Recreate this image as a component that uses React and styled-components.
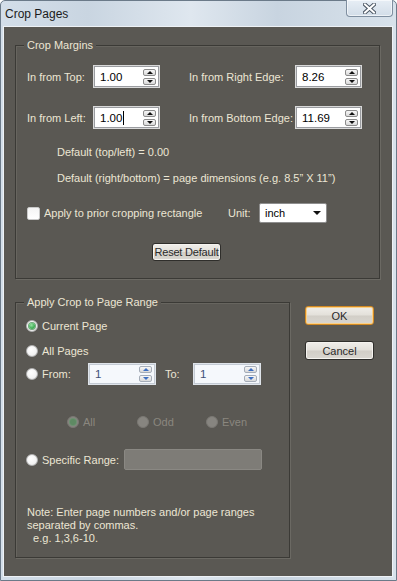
import React from 'react';
import styled, { createGlobalStyle, css } from 'styled-components';

const GlobalStyle = createGlobalStyle`
  html, body { margin: 0; padding: 0; background: #ffffff; }
  body { font-family: "Liberation Sans", Arial, sans-serif; font-size: 11px; }
  * { box-sizing: border-box; }
`;

const BG = '#5a5853';
const TEXT = '#ece6d4';

const Window = styled.div`
  width: 397px;
  height: 581px;
  display: flex;
  flex-direction: column;
  border: 1px solid #6b7a89;
  border-radius: 5px 5px 0 0;
  background: linear-gradient(90deg, #d3dee9 0%, #c9d5e1 22%, #dfe7ef 48%, #c8d4e0 70%, #d8e2eb 100%);
  padding: 0 3px 3px 2px;
`;

const TitleBar = styled.div`
  height: 25px;
  display: flex;
  align-items: center;
  padding-left: 2px;
`;

const Title = styled.div`
  font-size: 12px;
  color: #1b1b1b;
  margin-top: 1px;
`;

const CloseButton = styled.div`
  margin-left: auto;
  align-self: flex-start;
  margin-top: -1px;
  width: 47px;
  height: 17px;
  border: 1px solid #7f8fa0;
  border-top: none;
  border-radius: 0 0 4px 4px;
  background: linear-gradient(#e7eef5, #d2dde8);
  display: flex;
  align-items: center;
  justify-content: center;
  box-shadow: inset 0 0 0 1px rgba(255,255,255,0.6);
`;

const Content = styled.div`
  flex: 1;
  border: 1px solid #eef2f6;
  background: ${BG};
  padding: 18px 11px 0 11px;
  color: ${TEXT};
`;

const Group = styled.div`
  position: relative;
  width: ${p => p.$w}px;
  border: 1px solid #3b3a36;
  box-shadow: 1px 1px 0 #6b6963, inset 1px 1px 0 #67655f;
  padding: ${p => p.$pad};
`;

const Legend = styled.span`
  position: absolute;
  top: -7px;
  left: 8px;
  padding: 0 3px;
  line-height: 13px;
  background: ${BG};
  color: ${TEXT};
`;

const MarginGrid = styled.div`
  display: grid;
  grid-template-columns: 66px 96px 106px 67px;
  grid-auto-rows: 23px;
  row-gap: 18px;
  align-items: center;
`;

const Label = styled.span`
  white-space: nowrap;
  color: ${p => (p.$disabled ? '#8a877f' : TEXT)};
  width: ${p => (p.$w ? `${p.$w}px` : 'auto')};
  flex: none;
`;

const Field = styled.div`
  width: ${p => p.$w}px;
  height: ${p => p.$h}px;
  flex: none;
  display: flex;
  align-items: center;
  padding: 0 3px 0 6px;
  ${p => p.$variant === 'normal' && css`
    background: #ffffff;
    border: 1px solid #d9d9d9;
    box-shadow: inset 0 0 0 1px #9a9ca0;
    color: #000;
  `}
  ${p => p.$variant === 'pale' && css`
    background: #f5f8fc;
    border: 1px solid #dfe4ea;
    box-shadow: inset 0 0 0 1px #c4cbd4;
    color: #3d5178;
  `}
  ${p => p.$variant === 'dim' && css`
    background: #7e7c77;
    border: 1px solid #8a8883;
    border-radius: 2px;
  `}
`;

const Value = styled.span`
  flex: 1;
  display: flex;
  align-items: center;
  font-size: 11.5px;
`;

const Caret = styled.span`
  width: 1px;
  height: 14px;
  background: #000;
  margin-left: 1px;
`;

const SpinCol = styled.div`
  display: flex;
  flex-direction: column;
  gap: 2px;
`;

const SpinBtn = styled.div`
  width: 13px;
  height: 7px;
  border: 1px solid ${p => (p.$blue ? '#a5adb8' : '#8b8b8b')};
  border-radius: 2px;
  background: linear-gradient(#f7f7f7, #d9d9d9);
  display: flex;
  align-items: center;
  justify-content: center;
`;

const Arrow = styled.span`
  width: 0;
  height: 0;
  border-left: ${p => p.$size}px solid transparent;
  border-right: ${p => p.$size}px solid transparent;
  ${p => (p.$dir === 'up'
    ? css`border-bottom: ${p.$hgt}px solid ${p.$color};`
    : css`border-top: ${p.$hgt}px solid ${p.$color};`)}
`;

const Spinner = ({ blue }) => {
  const c = blue ? '#3c6fc2' : '#111';
  return (
    <SpinCol>
      <SpinBtn $blue={blue}><Arrow $dir="up" $size={3} $hgt={3} $color={c} /></SpinBtn>
      <SpinBtn $blue={blue}><Arrow $dir="down" $size={3} $hgt={3} $color={c} /></SpinBtn>
    </SpinCol>
  );
};

const DefaultNote = styled.div`
  margin-top: ${p => p.$mt}px;
  margin-left: 30px;
  line-height: 14px;
  white-space: nowrap;
`;

const CheckRow = styled.div`
  margin-top: 18px;
  height: 20px;
  display: flex;
  align-items: center;
`;

const Checkbox = styled.span`
  width: 13px;
  height: 13px;
  flex: none;
  background: linear-gradient(#f4f4f4, #ffffff);
  border: 1px solid #c9c9c9;
  border-radius: 2px;
  margin-right: 4px;
`;

const Select = styled.div`
  width: 68px;
  height: 20px;
  background: #fff;
  border: 1px solid #8e8e8e;
  border-radius: 2px;
  display: flex;
  align-items: center;
  justify-content: space-between;
  padding: 0 5px 0 5px;
  color: #000;
`;

const Button = styled.div`
  width: ${p => p.$w}px;
  height: ${p => p.$h}px;
  display: flex;
  align-items: center;
  justify-content: center;
  color: #2a2a2a;
  border-radius: 3px;
  white-space: nowrap;
  background: linear-gradient(#f0eeea 0%, #e3e0da 48%, #d2cec7 52%, #d9d6d0 100%);
  border: 1px solid ${p => (p.$default ? '#d48a22' : '#2f2e2b')};
  box-shadow: inset 0 0 0 1px ${p => (p.$default ? '#fbd188' : '#f5f3ef')};
`;

const ResetButton = styled(Button)`
  margin-top: 20px;
  margin-left: 125px;
  letter-spacing: -0.2px;
`;

const BottomRow = styled.div`
  margin-top: 23px;
  display: flex;
  align-items: flex-start;
`;

const OptionRow = styled.div`
  display: flex;
  align-items: center;
  height: ${p => p.$h}px;
  margin-top: ${p => p.$mt}px;
  margin-left: ${p => p.$ml || 0}px;
`;

const RadioOption = styled.div`
  display: flex;
  align-items: center;
  gap: 4px;
  width: ${p => (p.$w ? `${p.$w}px` : 'auto')};
  flex: none;
`;

const Radio = styled.span`
  position: relative;
  width: 12px;
  height: 12px;
  flex: none;
  border-radius: 50%;
  ${p => (p.$disabled
    ? css`
      background: #878580;
      border: 1px solid #7a7873;
    `
    : css`
      background: radial-gradient(circle at 40% 35%, #ffffff 0%, #f3f3f3 60%, #dcdcdc 100%);
      border: 1px solid #b2b2b2;
    `)}
  &::after {
    content: '';
    display: ${p => (p.$checked ? 'block' : 'none')};
    position: absolute;
    left: 2px;
    top: 2px;
    width: 6px;
    height: 6px;
    border-radius: 50%;
    background: ${p => (p.$disabled
      ? '#5e8a63'
      : 'radial-gradient(circle at 40% 35%, #9be3a6 0%, #45b35a 55%, #2b8a3e 100%)')};
    box-shadow: 0 0 0 1px ${p => (p.$disabled ? '#6e9172' : '#6fa87a')};
  }
`;

const ToLabel = styled(Label)`
  margin-left: 9px;
`;

const Note = styled.div`
  margin-top: 36px;
  padding-left: 1px;
  line-height: 13px;
  white-space: pre;
`;

const ButtonCol = styled.div`
  margin-left: 15px;
  padding-top: 4px;
  display: flex;
  flex-direction: column;
  gap: 16px;
`;

const CloseGlyph = () => (
  <svg width="13" height="11" viewBox="0 0 13 11">
    <path d="M2 1.5 L11 9.5 M11 1.5 L2 9.5" stroke="#4b5663" strokeWidth="4" strokeLinecap="square" fill="none" />
    <path d="M2 1.5 L11 9.5 M11 1.5 L2 9.5" stroke="#ffffff" strokeWidth="2" strokeLinecap="square" fill="none" />
  </svg>
);

export default function App() {
  return (
    <>
      <GlobalStyle />
      <Window>
        <TitleBar>
          <Title>Crop Pages</Title>
          <CloseButton><CloseGlyph /></CloseButton>
        </TitleBar>
        <Content>
          <Group $w={365} $pad="19px 0 17px 11px">
            <Legend>Crop Margins</Legend>
            <MarginGrid>
              <Label>In from Top:</Label>
              <Field $variant="normal" $w={67} $h={23}>
                <Value>1.00</Value>
                <Spinner />
              </Field>
              <Label>In from Right Edge:</Label>
              <Field $variant="normal" $w={67} $h={23}>
                <Value>8.26</Value>
                <Spinner />
              </Field>
              <Label>In from Left:</Label>
              <Field $variant="normal" $w={67} $h={23}>
                <Value>1.00<Caret /></Value>
                <Spinner />
              </Field>
              <Label>In from Bottom Edge:</Label>
              <Field $variant="normal" $w={67} $h={23}>
                <Value>11.69</Value>
                <Spinner />
              </Field>
            </MarginGrid>
            <DefaultNote $mt={16}>Default (top/left) = 0.00</DefaultNote>
            <DefaultNote $mt={12}>Default (right/bottom) = page dimensions (e.g. 8.5” X 11”)</DefaultNote>
            <CheckRow>
              <Checkbox />
              <Label $w={184}>Apply to prior cropping rectangle</Label>
              <Label $w={31}>Unit:</Label>
              <Select>
                <span>inch</span>
                <Arrow $dir="down" $size={4} $hgt={4} $color="#111" />
              </Select>
            </CheckRow>
            <ResetButton $w={69} $h={18}>Reset Default</ResetButton>
          </Group>

          <BottomRow>
            <Group $w={275} $pad="15px 0 12px 10px">
              <Legend>Apply Crop to Page Range</Legend>
              <OptionRow $h={16} $mt={0}>
                <RadioOption><Radio $checked /><Label>Current Page</Label></RadioOption>
              </OptionRow>
              <OptionRow $h={16} $mt={9}>
                <RadioOption><Radio /><Label>All Pages</Label></RadioOption>
              </OptionRow>
              <OptionRow $h={22} $mt={4}>
                <RadioOption $w={62}><Radio /><Label>From:</Label></RadioOption>
                <Field $variant="pale" $w={68} $h={22}>
                  <Value>1</Value>
                  <Spinner blue />
                </Field>
                <ToLabel $w={28}>To:</ToLabel>
                <Field $variant="pale" $w={68} $h={22}>
                  <Value>1</Value>
                  <Spinner blue />
                </Field>
              </OptionRow>
              <OptionRow $h={16} $mt={29} $ml={41}>
                <RadioOption $w={70}><Radio $disabled $checked /><Label $disabled>All</Label></RadioOption>
                <RadioOption $w={69}><Radio $disabled /><Label $disabled>Odd</Label></RadioOption>
                <RadioOption><Radio $disabled /><Label $disabled>Even</Label></RadioOption>
              </OptionRow>
              <OptionRow $h={21} $mt={19}>
                <RadioOption $w={98}><Radio /><Label>Specific Range:</Label></RadioOption>
                <Field $variant="dim" $w={138} $h={21} />
              </OptionRow>
              <Note>{'Note: Enter page numbers and/or page ranges\nseparated by commas.\n  e.g. 1,3,6-10.'}</Note>
            </Group>
            <ButtonCol>
              <Button $w={69} $h={19} $default>OK</Button>
              <Button $w={69} $h={19}>Cancel</Button>
            </ButtonCol>
          </BottomRow>
        </Content>
      </Window>
    </>
  );
}
